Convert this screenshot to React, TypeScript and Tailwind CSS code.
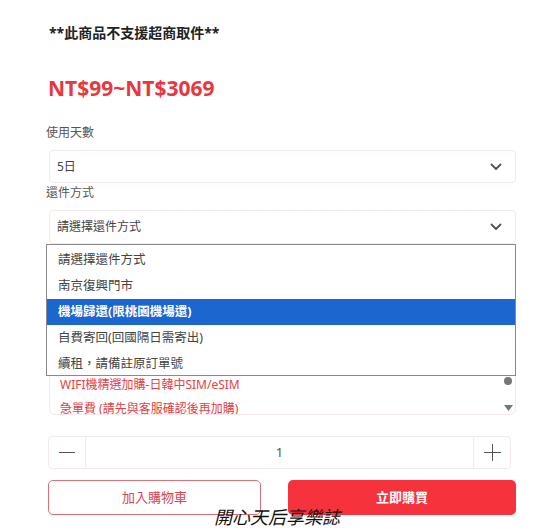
import React from "react";

const Chevron = () => (
  <svg width="12" height="8" viewBox="0 0 12 8" className="shrink-0">
    <path d="M1.5 1.5 L6 6 L10.5 1.5" fill="none" stroke="#555" strokeWidth="1.8" strokeLinecap="round" strokeLinejoin="round" />
  </svg>
);

export default function App() {
  const font = { fontFamily: '"Noto Sans", "Noto Sans CJK TC", sans-serif' };
  const options = ["請選擇還件方式", "南京復興門市", "機場歸還(限桃園機場還)", "自費寄回(回國隔日需寄出)", "續租，請備註原訂單號"];
  return (
    <div className="relative w-[554px] h-[531px] bg-white overflow-hidden" style={font}>
      <div className="ml-[46px] w-[470px] flex flex-col">
        <div className="mt-[23px] h-[20px] ml-[3px] text-[14px] leading-[20px] font-bold text-[#222]">**此商品不支援超商取件**</div>
        <div className="mt-[30px] h-[30px] ml-[2px] text-[21px] leading-[30px] font-bold text-[#e8383d]">NT$99~NT$3069</div>
        <div className="mt-[20px] h-[20px] text-[12px] leading-[20px] text-[#555]">使用天數</div>
        <div className="mt-[7px] ml-[3px] w-[467px] h-[33px] border border-[#f5e9e9] rounded-[4px] flex items-center justify-between pl-[7px] pr-[13px]">
          <span className="text-[12px] text-[#444]">5日</span>
          <Chevron />
        </div>
        <div className="h-[20px] text-[12px] leading-[20px] text-[#555]">還件方式</div>
        <div className="relative mt-[7px] ml-[3px] w-[467px]">
          <div className="h-[34px] border border-[#f5e9e9] rounded-[4px] flex items-center justify-between pl-[7px] pr-[13px]">
            <span className="text-[12px] text-[#444]">請選擇還件方式</span>
            <Chevron />
          </div>
          <div className="mt-[8px] h-[163px] border border-[#f5e9e9] rounded-[6px] flex overflow-hidden">
            <div className="flex-1 flex flex-col justify-end pl-[10px]">
              <div className="h-[24px] text-[12px] leading-[24px] text-[#e53e44]">WIFI機精選加購-日韓中SIM/eSIM</div>
              <div className="h-[24px] mb-[-7px] text-[12px] leading-[24px] text-[#e53e44]">急單費 (請先與客服確認後再加購)</div>
            </div>
            <div className="w-[14px] flex flex-col justify-end items-center pb-[3px]">
              <div className="w-[8px] h-[8px] rounded-full bg-[#777] mb-[20px]" />
              <svg width="9" height="6" viewBox="0 0 9 6"><path d="M0 0 H9 L4.5 6 Z" fill="#777" /></svg>
            </div>
          </div>
          <div className="absolute left-[-3px] top-[34px] w-[470px] h-[132px] border border-[#8a8a8a] bg-white flex flex-col pt-[2px]">
            {options.map((o, i) => (
              <div
                key={o}
                className={
                  i === 2
                    ? "h-[26px] shrink-0 leading-[26px] pl-[11px] text-[12.5px] bg-[#1c66cf] text-white font-bold"
                    : "h-[26px] shrink-0 leading-[26px] pl-[11px] text-[12.5px] text-[#444]"
                }
              >
                {o}
              </div>
            ))}
          </div>
        </div>
        <div className="mt-[21px] ml-[2px] w-[463px] h-[33px] border border-[#f5e9e9] rounded-[4px] flex items-stretch">
          <div className="w-[37px] border-r border-[#f5e9e9] flex items-center justify-center">
            <div className="w-[16px] h-[1px] bg-[#555]" />
          </div>
          <div className="flex-1 flex items-center justify-center text-[13px] text-[#555]">1</div>
          <div className="w-[37px] border-l border-[#f5e9e9] flex items-center justify-center relative">
            <div className="w-[17px] h-[1px] bg-[#555]" />
            <div className="absolute w-[1px] h-[17px] bg-[#555]" />
          </div>
        </div>
        <div className="mt-[11px] ml-[2px] flex gap-[27px]">
          <div className="w-[213px] h-[35px] border border-[#e07077] rounded-[5px] flex items-center justify-center text-[13px] text-[#d9454d]">加入購物車</div>
          <div className="w-[228px] h-[35px] bg-[#f6323d] rounded-[5px] flex items-center justify-center text-[13px] font-bold text-white">立即購買</div>
        </div>
      </div>
      <div className="absolute left-0 right-0 top-[505px] text-center text-[18px] leading-[24px] italic text-[#111]">開心天后享樂誌</div>
    </div>
  );
}
